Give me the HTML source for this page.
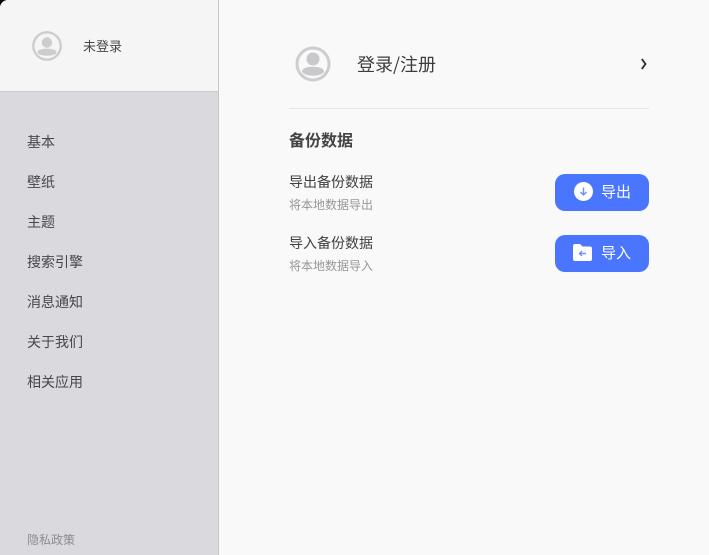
<!DOCTYPE html>
<html lang="zh">
<head>
<meta charset="utf-8">
<style>
*{margin:0;padding:0;box-sizing:border-box}
html,body{width:709px;height:555px;overflow:hidden;background:#000}
body{position:relative;font-family:"Liberation Sans","Noto Sans CJK SC",sans-serif}
.app{position:absolute;left:0;top:0;width:709px;height:555px;background:#f9f9f9;border-top-left-radius:8px;overflow:hidden}
.side{position:absolute;left:0;top:0;width:219px;height:555px;background:#dadade;border-right:1px solid #c6c6ca}
.head{position:absolute;left:0;top:0;width:218px;height:92px;background:#f5f5f5;border-bottom:1px solid #cbcbce}
.t{position:absolute;white-space:nowrap;line-height:20px}
.m{left:27px;font-size:14px;color:#47474b}
svg{position:absolute;display:block}
.btn{position:absolute;left:555px;width:94px;height:37px;border-radius:10px;background:#4a76ff}
.btn .t{left:46px;top:8px;font-size:15px;color:#fff;line-height:21px}
</style>
</head>
<body>
<div class="app">
  <div class="side">
    <div class="head">
      <svg style="left:32px;top:31px" width="30" height="30" viewBox="0 0 30 30">
        <circle cx="15" cy="15" r="13.700" fill="none" stroke="#cdcdd0" stroke-width="2.400"/>
        <circle cx="15" cy="11.500" r="5.200" fill="#cdcdd0"/>
        <ellipse cx="15" cy="21.200" rx="9.500" ry="3.600" fill="#cdcdd0"/>
      </svg>
      <div class="t" style="left:83px;top:37px;font-size:13px;color:#47474b">未登录</div>
    </div>
    <div class="t m" style="top:132px">基本</div>
    <div class="t m" style="top:172px">壁纸</div>
    <div class="t m" style="top:212px">主题</div>
    <div class="t m" style="top:252px">搜索引擎</div>
    <div class="t m" style="top:292px">消息通知</div>
    <div class="t m" style="top:332px">关于我们</div>
    <div class="t m" style="top:372px">相关应用</div>
    <div class="t" style="left:27px;top:530px;font-size:12px;color:#8c8c90">隐私政策</div>
  </div>

  <svg style="left:295px;top:46px" width="36" height="36" viewBox="0 0 36 36">
    <circle cx="18" cy="18" r="16" fill="none" stroke="#cdcdd0" stroke-width="3"/>
    <circle cx="18" cy="13" r="6.500" fill="#c8c8cd"/>
    <ellipse cx="18" cy="25.200" rx="11" ry="4.500" fill="#c8c8cd"/>
  </svg>
  <div class="t" style="left:357px;top:52px;font-size:18px;line-height:24px;color:#3d3d3d;font-family:'Noto Sans CJK SC',sans-serif">登录/注册</div>
  <svg style="left:640px;top:58px" width="8" height="12" viewBox="0 0 8 12">
    <path d="M1.800 1L5.500 6L1.800 11" fill="none" stroke="#26262a" stroke-width="1.800"/>
  </svg>
  <div style="position:absolute;left:289px;top:108px;width:360px;height:1px;background:#e6e6e6"></div>

  <div class="t" style="left:289px;top:131px;font-size:16px;line-height:22px;font-weight:700;color:#444">备份数据</div>

  <div class="t" style="left:289px;top:172px;font-size:14px;color:#404040">导出备份数据</div>
  <div class="t" style="left:289px;top:195px;font-size:12px;color:#97979b">将本地数据导出</div>
  <div class="btn" style="top:174px">
    <svg style="left:18.500px;top:7.500px" width="19" height="19" viewBox="0 0 19 19">
      <circle cx="9.500" cy="9.500" r="9.500" fill="#fff"/>
      <path d="M9.500 5.500V13M6.500 10L9.500 13l3-3" fill="none" stroke="#6f90ff" stroke-width="1.400"/>
    </svg>
    <div class="t">导出</div>
  </div>

  <div class="t" style="left:289px;top:233px;font-size:14px;color:#404040">导入备份数据</div>
  <div class="t" style="left:289px;top:256px;font-size:12px;color:#97979b">将本地数据导入</div>
  <div class="btn" style="top:235px">
    <svg style="left:18px;top:9px" width="19" height="17" viewBox="0 0 19 17">
      <path d="M2 0H7L9.500 2.500H17a2 2 0 0 1 2 2V15a2 2 0 0 1-2 2H2a2 2 0 0 1-2-2V2a2 2 0 0 1 2-2z" fill="#fff"/>
      <path d="M13 9.500H6.500M9 7L6.500 9.500L9 12" fill="none" stroke="#6f90ff" stroke-width="1.400"/>
    </svg>
    <div class="t">导入</div>
  </div>
</div>
</body>
</html>
